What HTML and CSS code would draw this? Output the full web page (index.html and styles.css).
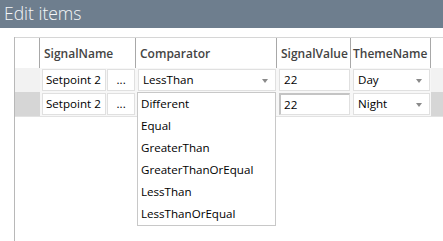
FILE: index.html
```html
<!DOCTYPE html>
<html>
<head>
<meta charset="utf-8">
<link rel="stylesheet" href="styles.css">
</head>
<body>
<div class="title">Edit items</div>
<div class="grid">
  <div class="row head">
    <div class="rh"></div>
    <div class="hc">SignalName</div>
    <div class="hc">Comparator</div>
    <div class="hc">SignalValue</div>
    <div class="hc tn">ThemeName</div>
    <div class="fill"></div>
  </div>
  <div class="row body r1">
    <div class="rh"></div>
    <div class="cell split"><div class="box name">Setpoint 2</div><div class="box btn">...</div></div>
    <div class="cell"><div class="box combo">LessThan<span class="arrow"></span></div></div>
    <div class="cell"><div class="box">22</div></div>
    <div class="cell"><div class="box combo">Day<span class="arrow"></span></div></div>
    <div class="fill"></div>
  </div>
  <div class="row body r2">
    <div class="rh"></div>
    <div class="cell split"><div class="box name">Setpoint 2</div><div class="box btn">...</div></div>
    <div class="cell"><div class="box combo"></div></div>
    <div class="cell"><div class="box focus">22</div></div>
    <div class="cell"><div class="box combo">Night<span class="arrow"></span></div></div>
    <div class="fill"></div>
  </div>
</div>
<ul class="popup">
  <li>Different</li>
  <li>Equal</li>
  <li>GreaterThan</li>
  <li>GreaterThanOrEqual</li>
  <li>LessThan</li>
  <li>LessThanOrEqual</li>
</ul>
</body>
</html>
```
FILE: styles.css
```css
* { box-sizing: border-box; }
body {
  margin: 0;
  width: 443px;
  height: 241px;
  overflow: hidden;
  background: #fff;
  font-family: "Open Sans", "Noto Sans", sans-serif;
  font-size: 11.6px;
  color: #000;
  position: relative;
}
.title {
  height: 28px;
  background: #6e7e8e;
  color: #f4f6f8;
  font-size: 17.5px;
  font-weight: 300;
  padding-left: 4px;
  line-height: 27px;
}
.grid {
  margin: 9px 0 0 14px;
  border-left: 1px solid #b8b8b8;
  height: 204px;
}
.row {
  display: grid;
  grid-template-columns: 25px 96px 141px 74px 80px 1fr;
}
.head {
  height: 31px;
  border-top: 1px solid #d6d6d6;
}
.head .rh { border-right: 1px solid #a8a8a8; }
.hc {
  border-right: 1px solid #a8a8a8;
  font-weight: 600;
  font-size: 12px;
  color: #444;
  padding-left: 4px;
  display: flex;
  align-items: center;
  white-space: nowrap;
  overflow: hidden;
}
.hc.tn { padding-left: 2px; }
.body { height: 24px; }
.r2 { height: 25px; border-bottom: 1px solid #e2e2e2; }
.r1 .rh, .r1 .fill { background: #f2f2f2; }
.r2 .rh, .r2 .fill { background: #d6d6d6; }
.r1 .cell { background: #f7f7f7; }
.r2 .cell { background: #f7f7f7; }
.cell {
  padding: 1px 1px 1px 2px;
}
.split {
  display: flex;
  gap: 1px;
}
.box {
  height: 22px;
  background: #fff;
  border: 1px solid #e0e0e0;
  padding-left: 4px;
  line-height: 20px;
  white-space: nowrap;
  position: relative;
}
.box.name { width: 65px; padding-left: 3px; }
.box.btn { width: 28px; padding-left: 0; text-align: center; }
.box.focus {
  border-top: 2px solid #c4c4c4;
  border-left: 2px solid #c4c4c4;
  padding-left: 3px;
  line-height: 19px;
}
.arrow {
  position: absolute;
  right: 7px;
  top: 9px;
  width: 0;
  height: 0;
  border-left: 3.5px solid transparent;
  border-right: 3.5px solid transparent;
  border-top: 4px solid #8a8a8a;
}
.popup {
  position: absolute;
  left: 137px;
  top: 92px;
  width: 139px;
  margin: 0;
  padding: 0;
  list-style: none;
  background: #fff;
  border: 1px solid #c8c8c8;
}
.popup li {
  height: 22px;
  line-height: 22px;
  padding-left: 3px;
}
```
